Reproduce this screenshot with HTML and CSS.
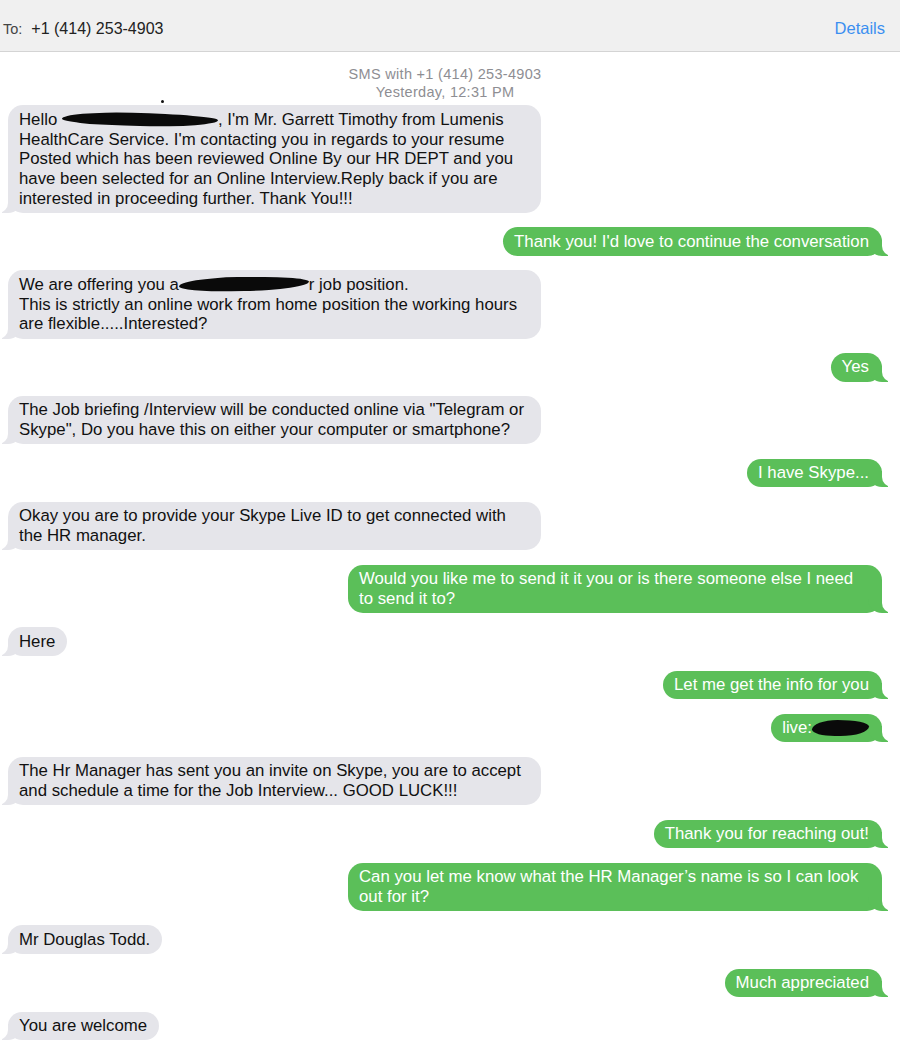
FILE: index.html
```html
<!DOCTYPE html>
<html lang="en">
<head>
    <meta charset="UTF-8">
    <meta name="viewport" content="width=device-width, initial-scale=1.0">
    <title>Messages</title>
    <link rel="stylesheet" href="styles.css">
</head>
<body>
    <div class="topbar">
        <span class="to-label">To:</span>
        <span class="to-number">+1 (414) 253-4903</span>
        <a class="details" href="#">Details</a>
    </div>

    <div class="thread">
        <div class="meta">
            <p>SMS with +1 (414) 253-4903</p>
            <p>Yesterday, 12:31 PM</p>
        </div>

        <div class="bubble them wide">
            <span class="speck"></span>
            Hello <span class="scribble name"></span>, I'm Mr. Garrett Timothy from Lumenis<br>
            HealthCare Service. I'm contacting you in regards to your resume<br>
            Posted which has been reviewed Online By our HR DEPT and you<br>
            have been selected for an Online Interview.Reply back if you are<br>
            interested in proceeding further. Thank You!!!
        </div>

        <div class="bubble me">Thank you! I'd love to continue the conversation</div>

        <div class="bubble them wide">
            We are offering you a<span class="scribble job"></span>r job position.<br>
            This is strictly an online work from home position the working hours<br>
            are flexible.....Interested?
        </div>

        <div class="bubble me">Yes</div>

        <div class="bubble them wide">
            The Job briefing /Interview will be conducted online via "Telegram or<br>
            Skype", Do you have this on either your computer or smartphone?
        </div>

        <div class="bubble me">I have Skype...</div>

        <div class="bubble them wide">
            Okay you are to provide your Skype Live ID to get connected with<br>
            the HR manager.
        </div>

        <div class="bubble me wide">
            Would you like me to send it it you or is there someone else I need<br>
            to send it to?
        </div>

        <div class="bubble them">Here</div>

        <div class="bubble me">Let me get the info for you</div>

        <div class="bubble me">live:<span class="scribble handle"></span></div>

        <div class="bubble them wide">
            The Hr Manager has sent you an invite on Skype, you are to accept<br>
            and schedule a time for the Job Interview... GOOD LUCK!!!
        </div>

        <div class="bubble me">Thank you for reaching out!</div>

        <div class="bubble me wide">
            Can you let me know what the HR Manager’s name is so I can look<br>
            out for it?
        </div>

        <div class="bubble them">Mr Douglas Todd.</div>

        <div class="bubble me">Much appreciated</div>

        <div class="bubble them">You are welcome</div>
    </div>
</body>
</html>
```

FILE: styles.css
```css
body {
    font-family: "Liberation Sans", Arial, sans-serif;
    margin: 0;
    padding: 0;
    background-color: #fff;
    overflow: hidden;
}

.topbar {
    display: flex;
    align-items: center;
    height: 52px;
    padding: 6px 15px 0 3px;
    box-sizing: border-box;
    background: #f0f0f0;
    border-bottom: 1px solid #d4d4d4;
    font-size: 16px;
}

.to-label {
    color: #444;
    font-size: 14.5px;
    margin-right: 9px;
}

.to-number {
    color: #222;
    flex: 1;
}

.details {
    color: #3b8ff0;
    font-size: 16.5px;
    text-decoration: none;
}

.thread {
    display: flex;
    flex-direction: column;
    gap: 14.4px;
    padding: 13px 18px 0 8px;
}

.meta {
    text-align: center;
    color: #8e8e93;
    font-size: 14.5px;
    line-height: 18px;
    letter-spacing: 0.3px;
    margin-bottom: -10px;
}

.meta p {
    margin: 0;
}

.bubble {
    position: relative;
    z-index: 0;
    max-width: 510px;
    padding: 4.5px 12px 4.5px 11px;
    font-size: 16.8px;
    line-height: 19.7px;
    border-radius: 15px;
    white-space: nowrap;
}

.bubble.wide {
    width: 510px;
}

.them {
    align-self: flex-start;
    background: #e5e5ea;
    color: #111;
}

.me {
    align-self: flex-end;
    background: #5bbf59;
    color: #fff;
    padding-right: 13px;
}

.me.wide {
    width: 511px;
}

/* tails */
.bubble::before,
.bubble::after {
    content: "";
    position: absolute;
    z-index: -1;
    bottom: 0;
    height: 16px;
}

.them::before {
    left: -6px;
    width: 20px;
    background: #e5e5ea;
    border-bottom-right-radius: 14px;
}

.them::after {
    left: -20px;
    width: 20px;
    background: #fff;
    border-bottom-right-radius: 10px;
}

.me::before {
    right: -6px;
    width: 20px;
    background: #5bbf59;
    border-bottom-left-radius: 14px;
}

.me::after {
    right: -20px;
    width: 20px;
    background: #fff;
    border-bottom-left-radius: 10px;
}

/* redactions */
.scribble {
    display: inline-block;
    background: #0a0a0a;
    border-radius: 45% 55% 50% 40% / 60% 40% 60% 40%;
    vertical-align: -1px;
}

.scribble.name {
    width: 156px;
    height: 13px;
    transform: rotate(1.5deg);
}

.scribble.job {
    width: 130px;
    height: 14px;
    transform: rotate(-1deg);
}

.scribble.handle {
    width: 57px;
    height: 16px;
    vertical-align: -3px;
}

.speck {
    position: absolute;
    top: -5px;
    left: 153px;
    width: 3px;
    height: 3px;
    border-radius: 50%;
    background: #111;
}
```
